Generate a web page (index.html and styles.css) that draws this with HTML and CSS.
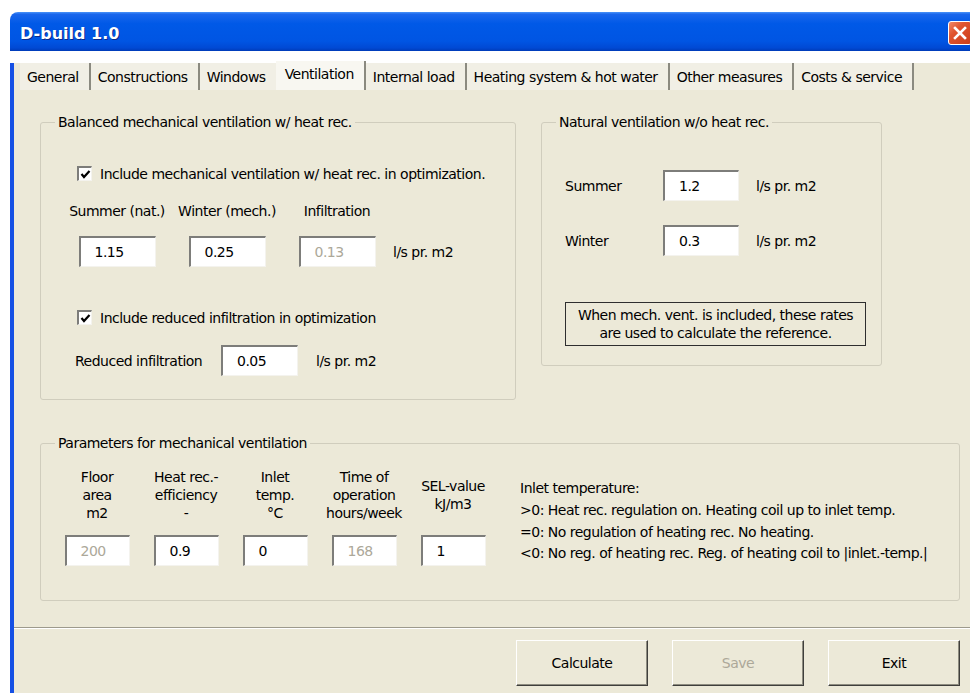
FILE: index.html
```html
<!DOCTYPE html>
<html lang="en">
<head>
<meta charset="utf-8">
<title>D-build 1.0</title>
<link rel="stylesheet" href="styles.css">
</head>
<body>
<div class="window">
  <div class="titlebar">
    <span class="title">D-build 1.0</span>
    <span class="close" aria-label="Close">
      <svg width="14" height="14" viewBox="0 0 14 14"><path d="M2 2 L12 12 M12 2 L2 12" stroke="#fff" stroke-width="2.6" stroke-linecap="square"/></svg>
    </span>
  </div>

  <div class="client">
    <div class="tabs">
      <span class="tab">General</span>
      <span class="tab">Constructions</span>
      <span class="tab">Windows</span>
      <span class="tab on">Ventilation</span>
      <span class="tab">Internal load</span>
      <span class="tab">Heating system &amp; hot water</span>
      <span class="tab">Other measures</span>
      <span class="tab">Costs &amp; service</span>
    </div>

    <div class="page">
      <div class="top-row">
        <fieldset class="group group-mech">
          <legend>Balanced mechanical ventilation w/ heat rec.</legend>
          <div class="check check-mech">
            <span class="box"><svg width="11" height="11" viewBox="0 0 11 11"><path d="M1.5 5 L4 8 L9.5 2" fill="none" stroke="#000" stroke-width="2.2"/></svg></span>
            <span>Include mechanical ventilation w/ heat rec. in optimization.</span>
          </div>
          <div class="rates">
            <span class="cap">Summer (nat.)</span>
            <span class="cap">Winter (mech.)</span>
            <span class="cap">Infiltration</span>
            <span></span>
            <span class="field">1.15</span>
            <span class="field">0.25</span>
            <span class="field off">0.13</span>
            <span class="unit">l/s pr. m2</span>
          </div>
          <div class="check check-infil">
            <span class="box"><svg width="11" height="11" viewBox="0 0 11 11"><path d="M1.5 5 L4 8 L9.5 2" fill="none" stroke="#000" stroke-width="2.2"/></svg></span>
            <span>Include reduced infiltration in optimization</span>
          </div>
          <div class="reduced">
            <span class="reduced-label">Reduced infiltration</span>
            <span class="field">0.05</span>
            <span class="unit">l/s pr. m2</span>
          </div>
        </fieldset>

        <fieldset class="group group-nat">
          <legend>Natural ventilation w/o heat rec.</legend>
          <div class="nat-row nat-first">
            <span class="nat-label">Summer</span>
            <span class="field">1.2</span>
            <span class="unit">l/s pr. m2</span>
          </div>
          <div class="nat-row">
            <span class="nat-label">Winter</span>
            <span class="field">0.3</span>
            <span class="unit">l/s pr. m2</span>
          </div>
          <div class="note">When mech. vent. is included, these rates<br>are used to calculate the reference.</div>
        </fieldset>
      </div>

      <fieldset class="group group-params">
        <legend>Parameters for mechanical ventilation</legend>
        <div class="params-body">
          <div class="param-grid">
            <div class="head">Floor<br>area<br>m2</div>
            <div class="head">Heat rec.-<br>efficiency<br>-</div>
            <div class="head">Inlet<br>temp.<br>°C</div>
            <div class="head">Time of<br>operation<br>hours/week</div>
            <div class="head">SEL-value<br>kJ/m3</div>
            <span class="field small off">200</span>
            <span class="field small">0.9</span>
            <span class="field small">0</span>
            <span class="field small off">168</span>
            <span class="field small">1</span>
          </div>
          <div class="inlet-notes">
            <div>Inlet temperature:</div>
            <div>&gt;0: Heat rec. regulation on. Heating coil up to inlet temp.</div>
            <div>=0: No regulation of heating rec. No heating.</div>
            <div>&lt;0: No reg. of heating rec. Reg. of heating coil to |inlet.-temp.|</div>
          </div>
        </div>
      </fieldset>
    </div>

    <div class="divider"></div>

    <div class="buttons">
      <button class="btn" type="button">Calculate</button>
      <button class="btn" type="button" disabled>Save</button>
      <button class="btn" type="button">Exit</button>
    </div>
  </div>
</div>
</body>
</html>
```

FILE: styles.css
```css
html, body {
  margin: 0;
  padding: 0;
  overflow: hidden;
  background: #fff;
}

body {
  font-family: "DejaVu Sans", Tahoma, sans-serif;
  font-size: 14px;
  letter-spacing: -0.5px;
  color: #000;
}

/* ---------- window frame ---------- */
.window {
  margin: 12px 0 0 10px;
  width: 975px;
}

.titlebar {
  height: 39px;
  display: flex;
  align-items: center;
  padding-left: 10px;
  border-radius: 8px 8px 0 0;
  background: linear-gradient(#4a93f8 0, #1a66ec 6%, #0059e7 30%, #0055e3 75%, #0049d4 92%, #003bb8 100%);
}

.title {
  color: #fff;
  font-weight: bold;
  font-size: 16px;
  letter-spacing: 0;
  margin-top: 3px;
  text-shadow: 1px 1px 0 #0b2a8c;
}

.close {
  margin-left: auto;
  margin-right: 13px;
  margin-top: 3px;
  width: 24px;
  height: 24px;
  box-sizing: border-box;
  border: 1px solid #fff;
  border-radius: 3px;
  background: linear-gradient(135deg, #f08a6a 0, #e0552f 35%, #cc3d1a 100%);
  display: flex;
  align-items: center;
  justify-content: center;
}

.client {
  border-left: 4px solid #1550e4;
  background: #ece9d8;
  padding-bottom: 20px;
}

/* ---------- tab strip ---------- */
.tabs {
  display: flex;
  align-items: flex-end;
  margin-top: 12px;
  padding-left: 6px;
  height: 27px;
}

.tab {
  height: 27px;
  line-height: 29px;
  padding: 0 10px 0 7px;
  background: #f1efe5;
  border-right: 2px solid #8b8a80;
  box-sizing: border-box;
  white-space: nowrap;
}

.tab.on {
  height: 29px;
  line-height: 27px;
  margin-left: -2px;
  padding-left: 9px;
  background: #f8f7f1;
}

/* ---------- page body ---------- */
.page {
  padding: 24px 25px 0 26px;
}

.top-row {
  display: flex;
  align-items: flex-start;
  gap: 25px;
}

.group {
  margin: 0;
  padding: 0;
  min-width: 0;
  box-sizing: border-box;
  border: 1px solid #d0cdbd;
  border-radius: 3px;
}

.group legend {
  margin-left: 14px;
  padding: 0 3px;
  line-height: 17px;
}

.field {
  display: flex;
  align-items: center;
  box-sizing: border-box;
  width: 77px;
  height: 31px;
  padding-left: 14px;
  background: #fff;
  border-top: 2px solid #7d7d7a;
  border-left: 2px solid #7d7d7a;
  border-right: 1px solid #f4f3ee;
  border-bottom: 1px solid #f4f3ee;
}

.field.off {
  color: #aca899;
}

.field.small {
  width: 65px;
}

.unit {
  white-space: nowrap;
}

/* check boxes */
.check {
  display: flex;
  align-items: center;
  gap: 8px;
  height: 17px;
}

.box {
  width: 15px;
  height: 15px;
  box-sizing: border-box;
  background: #fff;
  border-top: 2px solid #7d7d7a;
  border-left: 2px solid #7d7d7a;
  border-right: 1px solid #f4f3ee;
  border-bottom: 1px solid #f4f3ee;
  display: flex;
  align-items: center;
  justify-content: center;
}

/* balanced mechanical ventilation */
.group-mech {
  width: 476px;
  height: 286px;
}

.check-mech {
  margin: 34px 0 0 36px;
}

.rates {
  display: grid;
  grid-template-columns: 100px 100px 100px auto;
  column-gap: 10px;
  row-gap: 16px;
  justify-items: center;
  align-items: center;
  margin: 21px 0 0 26px;
}

.rates .cap {
  line-height: 17px;
}

.rates .unit {
  justify-self: start;
  margin-left: -4px;
}

.check-infil {
  margin: 42px 0 0 36px;
}

.reduced {
  display: flex;
  align-items: center;
  margin: 19px 0 0 34px;
}

.reduced-label {
  width: 146px;
}

.reduced .unit {
  margin-left: 18px;
}

/* natural ventilation */
.group-nat {
  width: 341px;
  height: 252px;
}

.nat-row {
  display: flex;
  align-items: center;
  margin: 24px 0 0 23px;
}

.nat-row.nat-first {
  margin-top: 39px;
}

.nat-label {
  width: 98px;
}

.nat-row .field {
  width: 76px;
}

.nat-row .unit {
  margin-left: 17px;
}

.note {
  margin: 46px 0 0 23px;
  width: 301px;
  height: 44px;
  box-sizing: border-box;
  border: 1px solid #2e2e2e;
  padding-top: 3px;
  line-height: 18px;
  text-align: center;
}

/* parameters */
.group-params {
  height: 166px;
  margin-top: 35px;
}

.params-body {
  display: flex;
  align-items: flex-start;
  margin: 16px 0 0 16px;
}

.param-grid {
  display: grid;
  grid-template-columns: repeat(5, 80px);
  grid-template-rows: 54px 31px;
  column-gap: 9px;
  row-gap: 13px;
  justify-items: center;
}

.head {
  display: flex;
  flex-direction: column;
  justify-content: center;
  text-align: center;
  line-height: 18px;
  white-space: nowrap;
}

.inlet-notes {
  margin: 10px 0 0 27px;
  line-height: 21.8px;
  white-space: nowrap;
}

/* bottom bar */
.divider {
  margin-top: 26px;
  border-top: 1px solid #9d9a8c;
  border-bottom: 1px solid #fff;
}

.buttons {
  display: flex;
  justify-content: flex-end;
  gap: 24px;
  margin-top: 11px;
  padding-right: 25px;
}

.btn {
  width: 132px;
  height: 46px;
  box-sizing: border-box;
  font-family: inherit;
  font-size: 14px;
  letter-spacing: -0.5px;
  color: #000;
  background: #ece9d8;
  border: 1px solid;
  border-color: #fff #3f3f3c #3f3f3c #fff;
  box-shadow: inset -1px -1px 0 #8e8c80;
  padding: 0;
}

.btn:disabled {
  color: #aca899;
}
```
